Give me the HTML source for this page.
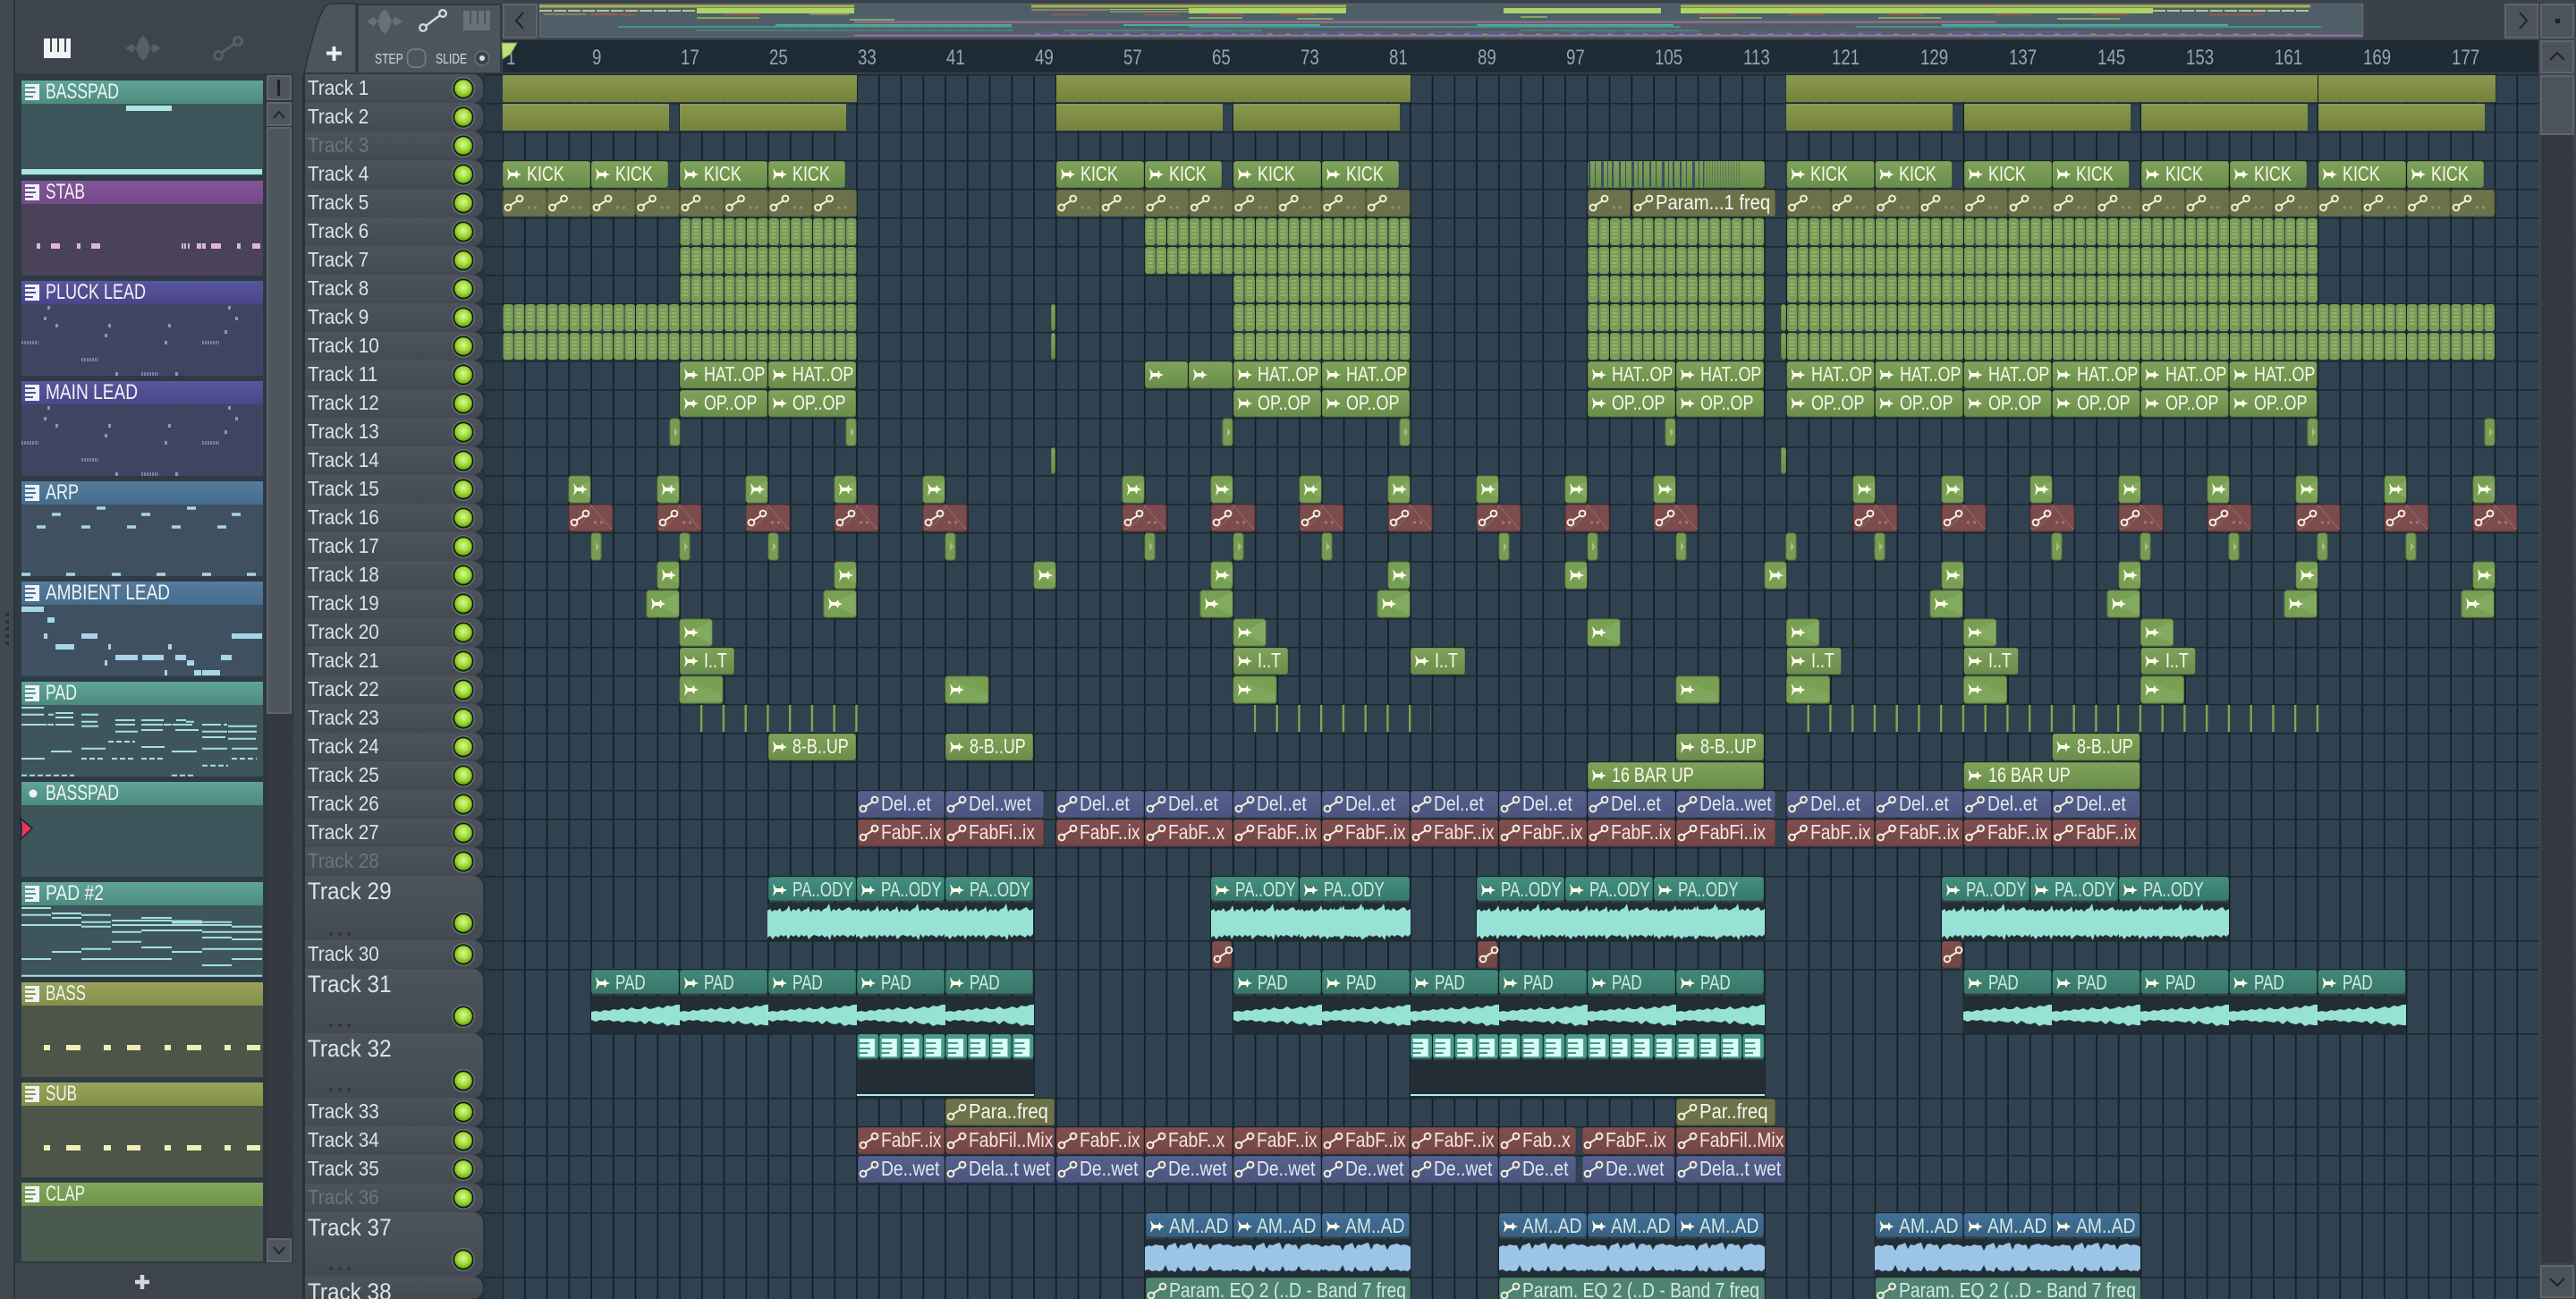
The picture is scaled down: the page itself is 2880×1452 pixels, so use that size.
<!DOCTYPE html>
<html><head><meta charset="utf-8"><title>Playlist</title>
<style>
html,body{margin:0;padding:0;background:#3e444d;width:2880px;height:1452px;overflow:hidden}
svg{display:block;font-family:"Liberation Sans",sans-serif}
text{transform-box:fill-box;transform-origin:0 0;transform:scaleX(.84)}
.c rect{y:-22px;height:30px;rx:3px;stroke:rgba(10,20,10,.28);stroke-width:1px}
.c text{fill:#f8f8ee;font-size:23px}
.o rect{fill:url(#go);stroke:none;rx:0}
.g rect{fill:url(#gg)}
.a rect{fill:#6b7149}
.r rect{fill:url(#gr)}
.b rect{fill:url(#gb)}
.t rect{fill:url(#gt)}
.t2 rect{fill:url(#gt2)}
.n rect{fill:url(#gn)}
.p rect{fill:#4f8272}
.h rect{height:27px}
.t text,.t2 text,.n text,.p text{fill:#cfe9e2}
.b text{fill:#e2e6f2}.r text{fill:#f5e4dc}
.g text{transform:scaleX(.78)}
.t text,.t2 text{transform:scaleX(.74)}
.a text{transform:scaleX(.88)}
.c rect.pt{stroke:none;rx:0}
.trk{fill:#d9e3ea;font-size:23px}
.trk text{transform:scaleX(.9)}
.big{font-size:27px}
.dis{fill:#6d747a}
.rul{fill:#93a6b6;font-size:24px}
.rul text{transform:scaleX(.78)}
.ch{fill:#f0f4f4;font-size:24px}
.ch text{transform:none}
.lbl{fill:#d3d8dc;font-size:16px;transform:scaleX(.76)}
</style></head><body>
<svg width="2880" height="1452" viewBox="0 0 2880 1452" xmlns="http://www.w3.org/2000/svg">
<defs>
<linearGradient id="go" x1="0" y1="0" x2="0" y2="1"><stop offset="0" stop-color="#8b984f"/><stop offset="1" stop-color="#74823c"/></linearGradient>
<linearGradient id="gg" x1="0" y1="0" x2="0" y2="1"><stop offset="0" stop-color="#7fa35b"/><stop offset="1" stop-color="#6a8d4a"/></linearGradient>
<linearGradient id="gr" x1="0" y1="0" x2="0" y2="1"><stop offset="0" stop-color="#80504f"/><stop offset="1" stop-color="#744547"/></linearGradient>
<linearGradient id="gb" x1="0" y1="0" x2="0" y2="1"><stop offset="0" stop-color="#55608c"/><stop offset="1" stop-color="#4b557f"/></linearGradient>
<linearGradient id="gt" x1="0" y1="0" x2="0" y2="1"><stop offset="0" stop-color="#42907f"/><stop offset="1" stop-color="#38786c"/></linearGradient>
<linearGradient id="gt2" x1="0" y1="0" x2="0" y2="1"><stop offset="0" stop-color="#41897b"/><stop offset="1" stop-color="#397668"/></linearGradient>
<linearGradient id="gn" x1="0" y1="0" x2="0" y2="1"><stop offset="0" stop-color="#42709a"/><stop offset="1" stop-color="#38607f"/></linearGradient>
<linearGradient id="pl" x1="0" y1="0" x2="0" y2="1"><stop offset="0" stop-color="#4c535b"/><stop offset="1" stop-color="#434a52"/></linearGradient>
<linearGradient id="h1" x1="0" y1="0" x2="0" y2="1"><stop offset="0" stop-color="#60a498"/><stop offset="1" stop-color="#4c8c7f"/></linearGradient>
<linearGradient id="h2" x1="0" y1="0" x2="0" y2="1"><stop offset="0" stop-color="#825696"/><stop offset="1" stop-color="#754889"/></linearGradient>
<linearGradient id="h3" x1="0" y1="0" x2="0" y2="1"><stop offset="0" stop-color="#58569c"/><stop offset="1" stop-color="#4a4688"/></linearGradient>
<linearGradient id="h4" x1="0" y1="0" x2="0" y2="1"><stop offset="0" stop-color="#567b9c"/><stop offset="1" stop-color="#456d8d"/></linearGradient>
<linearGradient id="h5" x1="0" y1="0" x2="0" y2="1"><stop offset="0" stop-color="#97a25c"/><stop offset="1" stop-color="#859046"/></linearGradient>
<linearGradient id="h6" x1="0" y1="0" x2="0" y2="1"><stop offset="0" stop-color="#80a65d"/><stop offset="1" stop-color="#6f9449"/></linearGradient>
<radialGradient id="led" cx=".5" cy=".42" r=".6"><stop offset="0" stop-color="#dcf79a"/><stop offset=".55" stop-color="#a4dc3c"/><stop offset="1" stop-color="#63a50e"/></radialGradient>
<pattern id="gl" width="24.75" height="10" patternUnits="userSpaceOnUse" patternTransform="translate(562,0)"><rect x="-.8" width="1.7" height="10" fill="#121d26"/><rect x="23.95" width="1.7" height="10" fill="#121d26"/></pattern>
<pattern id="rl" width="20" height="32" patternUnits="userSpaceOnUse" patternTransform="translate(0,83)"><rect width="20" height="1.6" fill="#1c2831"/></pattern>
<pattern id="hat" width="12.375" height="31" patternUnits="userSpaceOnUse" patternTransform="translate(562,-22)"><rect x=".5" width="11.3" height="30" rx="3" fill="#7a9d55"/><path d="M3 6h6M3 10h6M3 14h6M3 18h6M3 22h6" stroke="#a0bb80" stroke-width="1.3"/></pattern>
<g id="aptile"><rect x=".5" width="48.4" height="30" rx="3" fill="#6b7149" stroke="#555a3a"/><path d="M8.4 17.6L16.6 12.4" stroke="#f3eed8" stroke-width="2"/><circle cx="6" cy="20" r="3.4" fill="none" stroke="#f3eed8" stroke-width="2"/><circle cx="19" cy="10" r="3.4" fill="none" stroke="#f3eed8" stroke-width="2"/><path d="M28 20h3M35 20h3" stroke="#8d916e" stroke-width="3"/></g>
<pattern id="ap" width="49.5" height="31" patternUnits="userSpaceOnUse" patternTransform="translate(562,-22)"><use href="#aptile"/></pattern>
<pattern id="apb" width="49.5" height="31" patternUnits="userSpaceOnUse" patternTransform="translate(1180.75,-22)"><use href="#aptile"/></pattern>
<pattern id="pc" width="24.75" height="27" patternUnits="userSpaceOnUse" patternTransform="translate(562,-22)"><rect x=".5" width="23.6" height="27" rx="3" fill="#47998a"/><path fill="#d9fff6" fill-rule="evenodd" d="M3 5H20V25H3ZM3 9H14V11H3ZM3 15H15V17H3ZM3 20H12V22H3Z"/></pattern>
<pattern id="tick" width="24.75" height="31" patternUnits="userSpaceOnUse" patternTransform="translate(783,-22)"><rect width="2.4" height="30" fill="#85a552"/></pattern>
<pattern id="tp" width="240" height="32" patternUnits="userSpaceOnUse" patternTransform="translate(320,83)"><rect width="220" height="32" rx="12" fill="url(#pl)"/><circle cx="198" cy="16" r="13" fill="#6d747a"/><circle cx="198" cy="16" r="11.6" fill="#0f1f12"/><circle cx="198" cy="16" r="9.8" fill="url(#led)"/></pattern>
<pattern id="hc" width="4" height="4" patternUnits="userSpaceOnUse"><rect width="4" height="4" fill="#2f353b"/><path d="M0 4L4 0" stroke="#3a4047" stroke-width="1"/></pattern>
<path id="s" fill="#fffde8" d="M5 -14L9 -9L14 -9L15.5 -12L17 -8.5L21 -7L17 -5.5L15.5 -2L14 -5L9 -5L5 0L6.5 -7Z"/>
<g id="u" fill="none" stroke="#f3eed8" stroke-width="2"><path d="M8.4 -4.4L16.6 -9.6"/><circle cx="6" cy="-2" r="3.4"/><circle cx="19" cy="-12" r="3.4"/></g>
<g id="gi"><rect y="-22" width="24" height="30" rx="3" fill="#78a053" stroke="#5c7c40"/><path d="M3 -7L24 -16V2Z" fill="#8bb06b" opacity=".6"/><use href="#s" x="0"/></g>
<g id="gw"><rect y="-22" width="36" height="30" rx="3" fill="#78a053" stroke="#5c7c40"/><path d="M8 -7L36 -20V6Z" fill="#8bb06b" opacity=".6"/><use href="#s"/></g>
<g id="gn4"><rect y="-22" width="48" height="30" rx="3" fill="#78a053" stroke="#5c7c40"/><path d="M8 -18L47 -2V6H8Z" fill="#8bb06b" opacity=".4"/><use href="#s"/></g>
<g id="nr"><rect y="-22" width="11" height="30" rx="3" fill="#779c53" stroke="#5c7c40"/><path d="M5 -12L9 -7L5 -2Z" fill="#a3bf88"/></g>
<g id="rd"><rect y="-22" width="49" height="30" rx="3" fill="#7b4b4d" stroke="#5a3335"/><path d="M1 6Q18 2 25 -21L48 6" fill="none" stroke="#94696a" stroke-width="1"/><use href="#u"/><path d="M28 -2h3M35 -2h3" stroke="#9e7777" stroke-width="3"/></g>
<polygon id="w1" fill="#96e2d4" points="0,-13 3,-15 5,-12 8,-14 11,-13 14,-16 16,-12 19,-13 22,-15 24,-19 26,-12 29,-15 32,-13 35,-16 38,-12 41,-14 44,-15 46,-18 48,-11 51,-15 54,-13 57,-15 60,-12 63,-15 66,-16 69,-21 71,-12 74,-15 77,-13 80,-16 83,-13 86,-14 89,-16 92,-17 95,-13 99,-15 99,13 96,16 93,14 90,17 87,15 84,14 81,16 78,14 75,17 72,13 70,20 67,15 64,17 61,14 58,16 55,15 52,14 49,16 46,19 44,14 41,16 38,14 35,17 32,14 29,16 26,14 23,19 21,14 18,16 15,14 12,17 9,15 6,19 3,15 0,17"/>
<polygon id="w2" fill="#96e2d4" points="0,-4 5,-5 10,-4 15,-6 20,-5 25,-7 30,-6 35,-8 40,-6 45,-9 50,-7 55,-7 60,-10 65,-7 70,-8 75,-10 80,-8 85,-11 90,-10 95,-12 99,-12 99,11 95,11 90,10 85,12 80,8 75,10 70,9 65,6 60,10 55,6 50,8 45,7 40,6 35,8 30,6 25,7 20,5 15,6 10,5 5,7 0,5"/>
<polygon id="w3" fill="#9cc4e6" points="0,-12 4,-14 8,-13 12,-15 16,-14 20,-14 23,-8 26,-14 30,-15 34,-17 37,-10 40,-15 44,-14 48,-16 52,-17 55,-9 58,-15 62,-16 66,-14 70,-15 73,-9 76,-14 80,-15 84,-16 88,-14 92,-15 96,-14 99,-12 99,12 96,15 92,14 88,15 84,13 80,14 76,14 73,9 70,14 66,15 62,14 58,15 55,9 52,15 48,14 44,15 40,14 37,10 34,16 30,14 26,15 23,8 20,14 16,15 12,14 8,15 4,13 0,14"/>
</defs>

<rect width="2880" height="1452" fill="#3e444d"/>
<!-- grid -->
<rect x="542" y="83" width="2298" height="1369" fill="#30424f"/>
<rect x="542" y="83" width="20" height="1369" fill="#2b3a45"/>
<rect x="562" y="83" width="2276" height="1369" fill="url(#gl)"/>
<rect x="542" y="83" width="2296" height="896" fill="url(#rl)"/>
<path d="M542 979.8H2838M542 1051.8H2838M542 1083.8H2838M542 1155.8H2838M542 1227.8H2838M542 1259.8H2838M542 1291.8H2838M542 1323.8H2838M542 1355.8H2838M542 1427.8H2838" stroke="#1c2831" stroke-width="1.6"/>
<rect x="341" y="83" width="201" height="1369" fill="#27343e"/>
<!-- track headers -->
<rect x="320" y="83" width="240" height="896" fill="url(#tp)"/>
<g fill="url(#pl)">
<rect x="320" y="979" width="220" height="72" rx="12"/><rect x="320" y="1051" width="220" height="32" rx="12"/><rect x="320" y="1083" width="220" height="72" rx="12"/><rect x="320" y="1155" width="220" height="72" rx="12"/><rect x="320" y="1227" width="220" height="32" rx="12"/><rect x="320" y="1259" width="220" height="32" rx="12"/><rect x="320" y="1291" width="220" height="32" rx="12"/><rect x="320" y="1323" width="220" height="32" rx="12"/><rect x="320" y="1355" width="220" height="72" rx="12"/><rect x="320" y="1427" width="220" height="25" rx="12"/>
</g>
<g id="ld">
<g fill="#6d747a"><circle cx="518" cy="1032" r="13"/><circle cx="518" cy="1067" r="13"/><circle cx="518" cy="1136" r="13"/><circle cx="518" cy="1208" r="13"/><circle cx="518" cy="1243" r="13"/><circle cx="518" cy="1275" r="13"/><circle cx="518" cy="1307" r="13"/><circle cx="518" cy="1339" r="13"/><circle cx="518" cy="1408" r="13"/></g>
<g fill="#0f1f12"><circle cx="518" cy="1032" r="11.6"/><circle cx="518" cy="1067" r="11.6"/><circle cx="518" cy="1136" r="11.6"/><circle cx="518" cy="1208" r="11.6"/><circle cx="518" cy="1243" r="11.6"/><circle cx="518" cy="1275" r="11.6"/><circle cx="518" cy="1307" r="11.6"/><circle cx="518" cy="1339" r="11.6"/><circle cx="518" cy="1408" r="11.6"/></g>
<g fill="url(#led)"><circle cx="518" cy="1032" r="9.8"/><circle cx="518" cy="1067" r="9.8"/><circle cx="518" cy="1136" r="9.8"/><circle cx="518" cy="1208" r="9.8"/><circle cx="518" cy="1243" r="9.8"/><circle cx="518" cy="1275" r="9.8"/><circle cx="518" cy="1307" r="9.8"/><circle cx="518" cy="1339" r="9.8"/><circle cx="518" cy="1408" r="9.8"/></g>
</g>
<path d="M368 1042h4v4h-4zM378 1042h4v4h-4zM388 1042h4v4h-4zM368 1144h4v4h-4zM378 1144h4v4h-4zM388 1144h4v4h-4zM368 1216h4v4h-4zM378 1216h4v4h-4zM388 1216h4v4h-4zM368 1416h4v4h-4zM378 1416h4v4h-4zM388 1416h4v4h-4z" fill="#34393f"/>
<g class="trk">
<text x="344" y="106">Track 1</text><text x="344" y="138">Track 2</text><text x="344" y="170" class="dis">Track 3</text><text x="344" y="202">Track 4</text><text x="344" y="234">Track 5</text><text x="344" y="266">Track 6</text><text x="344" y="298">Track 7</text><text x="344" y="330">Track 8</text><text x="344" y="362">Track 9</text><text x="344" y="394">Track 10</text><text x="344" y="426">Track 11</text><text x="344" y="458">Track 12</text><text x="344" y="490">Track 13</text><text x="344" y="522">Track 14</text><text x="344" y="554">Track 15</text><text x="344" y="586">Track 16</text><text x="344" y="618">Track 17</text><text x="344" y="650">Track 18</text><text x="344" y="682">Track 19</text><text x="344" y="714">Track 20</text><text x="344" y="746">Track 21</text><text x="344" y="778">Track 22</text><text x="344" y="810">Track 23</text><text x="344" y="842">Track 24</text><text x="344" y="874">Track 25</text><text x="344" y="906">Track 26</text><text x="344" y="938">Track 27</text><text x="344" y="970" class="dis">Track 28</text>
<text x="344" y="1005" class="big">Track 29</text><text x="344" y="1074">Track 30</text><text x="344" y="1109" class="big">Track 31</text><text x="344" y="1181" class="big">Track 32</text><text x="344" y="1250">Track 33</text><text x="344" y="1282">Track 34</text><text x="344" y="1314">Track 35</text><text x="344" y="1346" class="dis">Track 36</text><text x="344" y="1381" class="big">Track 37</text><text x="344" y="1453" class="big">Track 38</text>
</g>

<!-- left area -->
<rect x="0" y="0" width="340" height="1452" fill="#3e444d"/>
<rect x="338" y="83" width="3" height="1369" fill="#2a3138"/>
<rect x="0" y="0" width="15" height="1452" fill="#414850"/>
<rect x="15" y="0" width="2" height="1452" fill="#2a3138"/>
<path d="M6 685h4v4h-4zM6 693h4v4h-4zM6 701h4v4h-4zM6 709h4v4h-4zM6 717h4v4h-4z" fill="#2b3138"/>
<rect x="17" y="82" width="311" height="1330" fill="#2e3a44"/>
<rect x="296" y="84" width="30" height="1326" fill="#2f353b"/>
<!-- toolbar icons -->
<path fill="#f0f2f3" fill-rule="evenodd" d="M49 43H79V65H49ZM56 43H58V58H56ZM64 43H66V58H64ZM72 43H74V58H72Z"/>
<path transform="translate(140,40)" fill="#565e66" d="M0 14L8 9L12 14L16 4L20 0L24 4L28 14L32 9L40 14L32 19L28 14L24 24L20 28L16 24L12 14L8 19Z"/>
<g fill="none" stroke="#565e66" stroke-width="3"><circle cx="244" cy="62" r="4.5"/><circle cx="266" cy="46" r="4.5"/><path d="M248 59L262 49"/></g>
<!-- cards -->
<g>
<rect x="24" y="90" width="270" height="106" fill="#3e565b"/><rect x="24" y="90" width="270" height="26" fill="url(#h1)"/>
<rect x="24" y="202" width="270" height="106" fill="#4a4259"/><rect x="24" y="202" width="270" height="26" fill="url(#h2)"/>
<rect x="24" y="314" width="270" height="106" fill="#3f4560"/><rect x="24" y="314" width="270" height="26" fill="url(#h3)"/>
<rect x="24" y="426" width="270" height="106" fill="#3f4560"/><rect x="24" y="426" width="270" height="26" fill="url(#h3)"/>
<rect x="24" y="538" width="270" height="106" fill="#3f5060"/><rect x="24" y="538" width="270" height="26" fill="url(#h4)"/>
<rect x="24" y="650" width="270" height="106" fill="#3f5060"/><rect x="24" y="650" width="270" height="26" fill="url(#h4)"/>
<rect x="24" y="762" width="270" height="106" fill="#3e565b"/><rect x="24" y="762" width="270" height="26" fill="url(#h1)"/>
<rect x="24" y="874" width="270" height="106" fill="#3e565b"/><rect x="24" y="874" width="270" height="26" fill="url(#h1)"/>
<rect x="24" y="986" width="270" height="106" fill="#3e565b"/><rect x="24" y="986" width="270" height="26" fill="url(#h1)"/>
<rect x="24" y="1098" width="270" height="106" fill="#4d5549"/><rect x="24" y="1098" width="270" height="26" fill="url(#h5)"/>
<rect x="24" y="1210" width="270" height="106" fill="#4d5549"/><rect x="24" y="1210" width="270" height="26" fill="url(#h5)"/>
<rect x="24" y="1322" width="270" height="88" fill="#4a5a4e"/><rect x="24" y="1322" width="270" height="26" fill="url(#h6)"/>
</g>
<g fill="#eef3fa" fill-rule="evenodd">
<path id="ci" d="M28 94H44V112H28ZM28 97H39V99H28ZM28 102H40V104H28ZM28 107H37V109H28Z"/>
<use href="#ci" y="112"/><use href="#ci" y="224"/><use href="#ci" y="336"/><use href="#ci" y="448"/><use href="#ci" y="560"/><use href="#ci" y="672"/><use href="#ci" y="896"/><use href="#ci" y="1008"/><use href="#ci" y="1120"/><use href="#ci" y="1232"/>
</g>
<circle cx="37" cy="887" r="4.5" fill="#eef3fa"/>
<g class="ch">
<text x="51" y="110" textLength="82" lengthAdjust="spacingAndGlyphs">BASSPAD</text>
<text x="51" y="222" textLength="44" lengthAdjust="spacingAndGlyphs">STAB</text>
<text x="51" y="334" textLength="112" lengthAdjust="spacingAndGlyphs">PLUCK LEAD</text>
<text x="51" y="446" textLength="103" lengthAdjust="spacingAndGlyphs">MAIN LEAD</text>
<text x="51" y="558" textLength="37" lengthAdjust="spacingAndGlyphs">ARP</text>
<text x="51" y="670" textLength="139" lengthAdjust="spacingAndGlyphs">AMBIENT LEAD</text>
<text x="51" y="782" textLength="35" lengthAdjust="spacingAndGlyphs">PAD</text>
<text x="51" y="894" textLength="82" lengthAdjust="spacingAndGlyphs">BASSPAD</text>
<text x="51" y="1006" textLength="65" lengthAdjust="spacingAndGlyphs">PAD #2</text>
<text x="51" y="1118" textLength="45" lengthAdjust="spacingAndGlyphs">BASS</text>
<text x="51" y="1230" textLength="35" lengthAdjust="spacingAndGlyphs">SUB</text>
<text x="51" y="1342" textLength="44" lengthAdjust="spacingAndGlyphs">CLAP</text>
</g>
<!-- thumbnails -->
<path d="M141 121h51M24 192h269" stroke="#a9e4e0" stroke-width="6"/>
<path d="M41 275h4M57 275h10M86 275h4M102 275h10M203 275h2M206 275h2M210 275h2M220 275h5M226 275h4M236 275h11M265 275h4M282 275h9" stroke="#e0b2e6" stroke-width="6"/>
<g id="pl1" stroke="#8f8fd4" fill="none">
<path stroke-width="4" d="M53 344h3M49 356h3M62 364h3M121 364h3M117 375h3M188 364h3M184 383h3M255 344h3M263 356h3M251 371h3M129 418h3M196 418h3"/>
<path stroke-width="4" stroke="#7a7cae" stroke-dasharray="2 1" d="M24 383h19M226 383h19M91 402h19M158 418h19"/>
</g>
<use href="#pl1" y="112"/>
<path stroke="#a8d4e8" stroke-width="3.6" d="M108 568h10M58 575h10M158 575h10M209 568h10M259 575h10M41 589h10M91 589h10M142 589h10M192 589h10M243 589h10M24 642h10M74 642h10M125 642h10M175 642h10M226 642h10M276 642h10"/>
<path stroke="#a8d4e8" stroke-width="6" d="M24 681h25M53 693h8M49 711h4M91 711h18M259 711h34M62 723h21M121 723h3M188 723h4M129 735h25M159 735h24M196 735h12M247 735h12M209 741h8M117 741h3M184 752h3M217 752h8M226 752h20"/>
<path stroke="#a6e0dc" stroke-width="2" d="M24 791h25M24 798.7h25M62 797h20M54 798.7h6M62 802h20M24 810h28M53 810h7M62 810h21M91 798.7h19M91 806.7h18M91 811.7h19M129 805h22M129 810h22M129 817.7h25M158 805h25M158 810h24M183 810h9M158 816h24M197 805h11M193 810h22M196 816h26M208 806.7h9M226 810h21M250 810h4M226 817.7h28M226 824h26M255 811.7h32M255 817.7h32M255 825.7h31M91 836.7h27M158 835h26M57 840h23M192 840h28M226 836.7h28M259 836.7h29M24 848h26"/>
<path stroke="#a6e0dc" stroke-width="2" stroke-dasharray="6 3" d="M91 848h27M125 848h27M158 848h27M259 848h28M226 855.7h29M121 829h30M24 866.7h59M192 866.7h27"/>
<path stroke="#a6e0dc" stroke-width="2" d="M24 1015h33M24 1022.7h33M91 1022.7h33M58 1021h33M58 1026h33M24 1034h67M91 1030.7h33M91 1035.7h33M125 1029h33M125 1034h33M125 1041.7h33M125 1052.7h33M158 1026h34M158 1029h34M158 1034h34M158 1040h34M192 1034h34M192 1040h34M226 1030.7h33M226 1034h33M226 1041.7h33M226 1048h33M259 1035.7h34M259 1041.7h34M259 1050h34M91 1060.7h33M158 1059h34M58 1064h33M192 1064h34M226 1060.7h67M24 1072h33M91 1072h101M259 1072h34M226 1079h33M24 1090.7h269"/>
<path stroke="#a6e0dc" stroke-width="4" d="M192 1030.5h34"/>
<path stroke="#efefb4" stroke-width="6" d="M49 1171h7M74 1171h16M116 1171h8M142 1171h15M184 1171h7M209 1171h16M251 1171h7M276 1171h15M49 1283h7M74 1283h16M116 1283h8M142 1283h15M184 1283h7M209 1283h16M251 1283h7M276 1283h15"/>
<path d="M23 915L36 926L23 938Q25 926 23 915Z" fill="#e8365b" stroke="#1a2230" stroke-width="1.5"/>
<!-- left scrollbar -->
<rect x="298" y="797" width="28" height="586" fill="url(#hc)"/>
<g fill="#4e555d" stroke="#5e656c" stroke-width="2"><rect x="299" y="85" width="26" height="26"/><rect x="299" y="115" width="26" height="25"/><rect x="299" y="143" width="26" height="654"/><rect x="299" y="1385" width="26" height="25"/></g>
<rect x="310" y="89" width="3" height="18" fill="#1c2228"/>
<path d="M306 132L312 125L318 132M306 1394L312 1401L318 1394" fill="none" stroke="#1c2228" stroke-width="1.8"/>
<path d="M151 1433h16M159 1425v16" stroke="#d4d9dd" stroke-width="4.5"/>
<!-- track tab -->
<path d="M340 82C345 60 354 22 362 10Q365 4 372 4H398V82Z" fill="#4c545c" stroke="#2c333a" stroke-width="1.5"/>
<rect x="400" y="5" width="160" height="77" fill="#4c545c" stroke="#2c333a" stroke-width="1.5"/>
<path d="M365 59.500h17M373.500 52v16" stroke="#eceff1" stroke-width="4"/>
<path transform="translate(410,10)" fill="#68707a" d="M0 14L8 9L12 14L16 4L20 0L24 4L28 14L32 9L40 14L32 19L28 14L24 24L20 28L16 24L12 14L8 19Z"/>
<g fill="none" stroke="#d4d9dd" stroke-width="2.4"><circle cx="473" cy="31" r="3.8"/><circle cx="495" cy="15" r="3.8"/><path d="M476 29L492 17"/></g>
<path fill="#68707a" fill-rule="evenodd" d="M518 12H548V34H518ZM525 12H527V27H525ZM533 12H535V27H533ZM541 12H543V27H541Z"/>
<text x="419" y="71" class="lbl">STEP</text><text x="487" y="71" class="lbl">SLIDE</text>
<rect x="455.500" y="55" width="20" height="20" rx="7" fill="none" stroke="#737a81" stroke-width="1.8"/>
<circle cx="539" cy="65" r="8" fill="#3b4249" stroke="#6b7279" stroke-width="1.4"/><circle cx="539" cy="65" r="3" fill="#d8dde0"/>
<!-- top right -->
<rect x="562" y="0" width="2318" height="45" fill="#3a4149"/>
<rect x="563" y="5" width="37" height="37" fill="#4c535b" stroke="#5e656c" stroke-width="2"/>
<path d="M585 14L577 23L585 32" fill="none" stroke="#1c2228" stroke-width="2"/>
<rect x="2801" y="5" width="36" height="37" fill="#4c535b" stroke="#5e656c" stroke-width="2"/>
<path d="M2817 14L2825 23L2817 32" fill="none" stroke="#1c2228" stroke-width="2"/>
<rect x="2841" y="5" width="36" height="37" fill="#4c535b" stroke="#5e656c" stroke-width="2"/>
<rect x="2857" y="21" width="5" height="5" fill="#1c2228"/>
<!-- overview -->
<rect x="603.500" y="4.500" width="2038" height="37" fill="#505e68" stroke="#5d6971" stroke-width="1.5"/>
<g>
<path d="M603 7h352M1153 7h352M1879 7h704" stroke="#a9b44e" stroke-width="3"/>
<path d="M603 12h176M2407 12h176" stroke="#d8e8a0" stroke-width="1.5" stroke-dasharray="14 2"/>
<path d="M779 12h176M1329 12h176M1681 12h176M1879 12h528" stroke="#a8d468" stroke-width="6"/>
<path d="M1241 10.500h88M1241 13h88" stroke="#a8c468" stroke-width="1"/>
<path d="M1153 11h88M608 16h48M660 16h30M905 16h44" stroke="#c2a070" stroke-width="1"/>
<path d="M660 16.500h50M810 16.500h40M1175 16.500h40M1278 16.500h40M1350 16.500h40M1430 16.500h40M1900 16.500h40M2000 16.500h40M2110 16.500h40M2230 16.500h40M2340 16.500h40M2470 16.500h60" stroke="#9a5a50" stroke-width="1.5"/>
<path d="M779 20h70M950 22h50M1329 20h60M1450 21h40M1700 19h30M1900 20h70M2100 20h70M2300 21h70" stroke="#98bc60" stroke-width="1.5"/>
<path d="M955 24h925M1879 24h352" stroke="#8878a8" stroke-width="1.2"/>
<path d="M955 25.500h925M1879 25.500h352" stroke="#a06670" stroke-width="1.2"/>
<path d="M867 28h264M1256 28h220M1651 28h220M2171 28h320" stroke="#50c0b0" stroke-width="1.5"/>
<path d="M691 30h440M1329 30h550M2075 30h520" stroke="#3fa69a" stroke-width="1.5"/>
<path d="M779 34h176M955 34h177M1190 34h220M1700 34h200" stroke="#4e8a7c" stroke-width="1.5" stroke-dasharray="18 1"/>
<path d="M1157 36h120M1290 36h130M1460 36h90M1600 36h100M1750 36h150M1950 36h160M2180 36h150" stroke="#5a62c0" stroke-width="1.3" stroke-dasharray="26 6"/>
<path d="M1157 38h1440" stroke="#6aa060" stroke-width="1.3" stroke-dasharray="6 14"/>
<path d="M955 39.500h1686" stroke="#b46fb4" stroke-width="1.5"/>
</g>
<!-- ruler -->
<rect x="562" y="45" width="2278" height="37" fill="#1f2b34"/>
<rect x="562" y="81" width="2278" height="2" fill="#333f49"/>
<rect x="2838" y="0" width="42" height="1452" fill="#3e444d"/>
<rect x="2841" y="5" width="36" height="37" fill="#4c535b" stroke="#5e656c" stroke-width="2"/>
<rect x="2857" y="21" width="5" height="5" fill="#1c2228"/>
<rect x="2841" y="84" width="36" height="1328" fill="url(#hc)"/>
<g fill="#4c535b" stroke="#5e656c" stroke-width="2"><rect x="2841" y="46" width="36" height="35"/><rect x="2841" y="85" width="36" height="65"/><rect x="2841" y="1415" width="36" height="35"/></g>
<path d="M2851 67L2859 59L2867 67M2851 1429L2859 1437L2867 1429" fill="none" stroke="#1c2228" stroke-width="2"/>
<g class="rul">
<text x="566" y="72">1</text><text x="662" y="72">9</text><text x="761" y="72">17</text><text x="860" y="72">25</text><text x="959" y="72">33</text><text x="1058" y="72">41</text><text x="1157" y="72">49</text><text x="1256" y="72">57</text><text x="1355" y="72">65</text><text x="1454" y="72">73</text><text x="1553" y="72">81</text><text x="1652" y="72">89</text><text x="1751" y="72">97</text><text x="1850" y="72">105</text><text x="1949" y="72">113</text><text x="2048" y="72">121</text><text x="2147" y="72">129</text><text x="2246" y="72">137</text><text x="2345" y="72">145</text><text x="2444" y="72">153</text><text x="2543" y="72">161</text><text x="2642" y="72">169</text><text x="2741" y="72">177</text>
</g>
<path d="M561 48H578L571 60L562 66Z" fill="#bfe07a" stroke="#7f9f45"/>

<!-- clips -->
<g class="c o" transform="translate(0,106)"><rect x="562" width="396" /><rect x="1181" width="396" /><rect x="1997" width="594" /><rect x="2592" width="198" /></g>
<g class="c o" transform="translate(0,138)"><rect x="562" width="186" /><rect x="760" width="186" /><rect x="1181" width="186" /><rect x="1379" width="186" /><rect x="1997" width="186" /><rect x="2196" width="186" /><rect x="2394" width="186" /><rect x="2592" width="186" /></g>

<g class="c g" transform="translate(0,202)">
<rect x="562" width="98" /><use href="#s" x="562"/><text x="589">KICK</text>
<rect x="661" width="86" /><use href="#s" x="661"/><text x="688">KICK</text>
<rect x="760" width="98" /><use href="#s" x="760"/><text x="787">KICK</text>
<rect x="859" width="86" /><use href="#s" x="859"/><text x="886">KICK</text>
<rect x="1181" width="98" /><use href="#s" x="1181"/><text x="1208">KICK</text>
<rect x="1280" width="86" /><use href="#s" x="1280"/><text x="1307">KICK</text>
<rect x="1379" width="98" /><use href="#s" x="1379"/><text x="1406">KICK</text>
<rect x="1478" width="86" /><use href="#s" x="1478"/><text x="1505">KICK</text>
<rect x="1775" width="198" />
<path d="M1776 -7H1905" stroke="#3c5068" stroke-width="29" stroke-dasharray="2 5 1 6 3 4 1 4 2 6"/>
<path d="M1905 -7H1946" stroke="#5b7a55" stroke-width="29" stroke-dasharray="1 2"/>
<rect x="1997.500" width="98" /><use href="#s" x="1997.500"/><text x="2024">KICK</text>
<rect x="2096.500" width="86" /><use href="#s" x="2096.500"/><text x="2123">KICK</text>
<rect x="2196" width="98" /><use href="#s" x="2196"/><text x="2223">KICK</text>
<rect x="2294.500" width="86" /><use href="#s" x="2294.500"/><text x="2321">KICK</text>
<rect x="2394" width="98" /><use href="#s" x="2394"/><text x="2421">KICK</text>
<rect x="2493" width="86" /><use href="#s" x="2493"/><text x="2520">KICK</text>
<rect x="2592" width="98" /><use href="#s" x="2592"/><text x="2619">KICK</text>
<rect x="2691" width="86" /><use href="#s" x="2691"/><text x="2718">KICK</text>
</g>

<g class="c" transform="translate(0,234)">
<rect class="pt" x="562" width="396" fill="url(#ap)" />
<rect class="pt" x="1180.750" width="396" fill="url(#apb)" />
<rect class="pt" x="1997.500" width="792" fill="url(#ap)" />
</g>
<g class="c a" transform="translate(0,234)">
<rect x="1775" width="48" /><use href="#u" x="1775"/><path d="M1803 -2h3M1810 -2h3" stroke="#8d916e" stroke-width="3"/>
<rect x="1825" width="160" /><use href="#u" x="1825"/><text x="1851">Param...1 freq</text>
</g>

<g class="c" transform="translate(0,266)"><rect class="pt" x="760" width="198" fill="url(#hat)" /><rect class="pt" x="1279.750" width="297" fill="url(#hat)" /><rect class="pt" x="1774.750" width="198" fill="url(#hat)" /><rect class="pt" x="1997.500" width="594" fill="url(#hat)" /></g>
<g class="c" transform="translate(0,298)"><rect class="pt" x="760" width="198" fill="url(#hat)" /><rect class="pt" x="1279.750" width="297" fill="url(#hat)" /><rect class="pt" x="1774.750" width="198" fill="url(#hat)" /><rect class="pt" x="1997.500" width="594" fill="url(#hat)" /></g>
<g class="c" transform="translate(0,330)"><rect class="pt" x="760" width="198" fill="url(#hat)" /><rect class="pt" x="1378.750" width="198" fill="url(#hat)" /><rect class="pt" x="1774.750" width="198" fill="url(#hat)" /><rect class="pt" x="1997.500" width="594" fill="url(#hat)" /></g>
<g class="c" transform="translate(0,362)"><rect class="pt" x="562" width="396" fill="url(#hat)" /><rect class="pt" x="1378.750" width="198" fill="url(#hat)" /><rect class="pt" x="1774.750" width="198" fill="url(#hat)" /><rect class="pt" x="1997.500" width="792" fill="url(#hat)" /><g class="g"><rect x="1175" width="5" /><rect x="1991" width="6" /></g></g>
<g class="c" transform="translate(0,394)"><rect class="pt" x="562" width="396" fill="url(#hat)" /><rect class="pt" x="1378.750" width="198" fill="url(#hat)" /><rect class="pt" x="1774.750" width="198" fill="url(#hat)" /><rect class="pt" x="1997.500" width="792" fill="url(#hat)" /><g class="g"><rect x="1175" width="5" /><rect x="1991" width="6" /></g></g>

<g class="c g" transform="translate(0,426)">
<rect x="760" width="98" /><use href="#s" x="760"/><text x="787">HAT..OP</text>
<rect x="859" width="98" /><use href="#s" x="859"/><text x="886">HAT..OP</text>
<rect x="1280" width="48" /><use href="#s" x="1280"/>
<rect x="1329" width="49" /><use href="#s" x="1329"/>
<rect x="1379" width="98" /><use href="#s" x="1379"/><text x="1406">HAT..OP</text>
<rect x="1478" width="98" /><use href="#s" x="1478"/><text x="1505">HAT..OP</text>
<rect x="1775" width="98" /><use href="#s" x="1775"/><text x="1802">HAT..OP</text>
<rect x="1874" width="98" /><use href="#s" x="1874"/><text x="1901">HAT..OP</text>
<rect x="1997.500" width="98" /><use href="#s" x="1997.500"/><text x="2025">HAT..OP</text>
<rect x="2096.500" width="98" /><use href="#s" x="2096.500"/><text x="2124">HAT..OP</text>
<rect x="2195.500" width="98" /><use href="#s" x="2195.500"/><text x="2223">HAT..OP</text>
<rect x="2294.500" width="98" /><use href="#s" x="2294.500"/><text x="2322">HAT..OP</text>
<rect x="2393.500" width="98" /><use href="#s" x="2393.500"/><text x="2421">HAT..OP</text>
<rect x="2492.500" width="98" /><use href="#s" x="2492.500"/><text x="2520">HAT..OP</text>
</g>
<g class="c g" transform="translate(0,458)">
<rect x="760" width="98" /><use href="#s" x="760"/><text x="787">OP..OP</text>
<rect x="859" width="98" /><use href="#s" x="859"/><text x="886">OP..OP</text>
<rect x="1379" width="98" /><use href="#s" x="1379"/><text x="1406">OP..OP</text>
<rect x="1478" width="98" /><use href="#s" x="1478"/><text x="1505">OP..OP</text>
<rect x="1775" width="98" /><use href="#s" x="1775"/><text x="1802">OP..OP</text>
<rect x="1874" width="98" /><use href="#s" x="1874"/><text x="1901">OP..OP</text>
<rect x="1997.500" width="98" /><use href="#s" x="1997.500"/><text x="2025">OP..OP</text>
<rect x="2096.500" width="98" /><use href="#s" x="2096.500"/><text x="2124">OP..OP</text>
<rect x="2195.500" width="98" /><use href="#s" x="2195.500"/><text x="2223">OP..OP</text>
<rect x="2294.500" width="98" /><use href="#s" x="2294.500"/><text x="2322">OP..OP</text>
<rect x="2393.500" width="98" /><use href="#s" x="2393.500"/><text x="2421">OP..OP</text>
<rect x="2492.500" width="98" /><use href="#s" x="2492.500"/><text x="2520">OP..OP</text>
</g>
<g transform="translate(0,490)"><use href="#nr" x="749"/><use href="#nr" x="946"/><use href="#nr" x="1367"/><use href="#nr" x="1565"/><use href="#nr" x="1862"/><use href="#nr" x="2580"/><use href="#nr" x="2778"/></g>
<g class="c g" transform="translate(0,522)"><rect x="1175" width="5" /><rect x="1991" width="6" /></g>
<g transform="translate(0,554)"><use href="#gi" x="636"/><use href="#gi" x="735"/><use href="#gi" x="834"/><use href="#gi" x="933"/><use href="#gi" x="1032"/><use href="#gi" x="1255"/><use href="#gi" x="1354"/><use href="#gi" x="1453"/><use href="#gi" x="1552"/><use href="#gi" x="1651"/><use href="#gi" x="1750"/><use href="#gi" x="1849"/><use href="#gi" x="2072"/><use href="#gi" x="2171"/><use href="#gi" x="2270"/><use href="#gi" x="2369"/><use href="#gi" x="2468"/><use href="#gi" x="2567"/><use href="#gi" x="2666"/><use href="#gi" x="2765"/></g>
<g transform="translate(0,586)"><use href="#rd" x="636"/><use href="#rd" x="735"/><use href="#rd" x="834"/><use href="#rd" x="933"/><use href="#rd" x="1032"/><use href="#rd" x="1255"/><use href="#rd" x="1354"/><use href="#rd" x="1453"/><use href="#rd" x="1552"/><use href="#rd" x="1651"/><use href="#rd" x="1750"/><use href="#rd" x="1849"/><use href="#rd" x="2072"/><use href="#rd" x="2171"/><use href="#rd" x="2270"/><use href="#rd" x="2369"/><use href="#rd" x="2468"/><use href="#rd" x="2567"/><use href="#rd" x="2666"/><use href="#rd" x="2765"/></g>
<g transform="translate(0,618)"><use href="#nr" x="661"/><use href="#nr" x="760"/><use href="#nr" x="859"/><use href="#nr" x="1057"/><use href="#nr" x="1280"/><use href="#nr" x="1379"/><use href="#nr" x="1478"/><use href="#nr" x="1676"/><use href="#nr" x="1775"/><use href="#nr" x="1874"/><use href="#nr" x="1997"/><use href="#nr" x="2096"/><use href="#nr" x="2294"/><use href="#nr" x="2393"/><use href="#nr" x="2492"/><use href="#nr" x="2591"/><use href="#nr" x="2690"/></g>
<g transform="translate(0,650)"><use href="#gi" x="735"/><use href="#gi" x="933"/><use href="#gi" x="1156"/><use href="#gi" x="1354"/><use href="#gi" x="1552"/><use href="#gi" x="1750"/><use href="#gi" x="1973"/><use href="#gi" x="2171"/><use href="#gi" x="2369"/><use href="#gi" x="2567"/><use href="#gi" x="2765"/></g>
<g transform="translate(0,682)"><use href="#gw" x="723"/><use href="#gw" x="921"/><use href="#gw" x="1342"/><use href="#gw" x="1540"/><use href="#gw" x="2158"/><use href="#gw" x="2356"/><use href="#gw" x="2554"/><use href="#gw" x="2752"/></g>
<g transform="translate(0,714)"><use href="#gw" x="760"/><use href="#gw" x="1379"/><use href="#gw" x="1775"/><use href="#gw" x="1997.500"/><use href="#gw" x="2195.500"/><use href="#gw" x="2393.500"/></g>
<g class="c g" transform="translate(0,746)">
<rect x="760" width="61" /><use href="#s" x="760"/><text x="787">I..T</text>
<rect x="1379" width="61" /><use href="#s" x="1379"/><text x="1406">I..T</text>
<rect x="1577" width="61" /><use href="#s" x="1577"/><text x="1604">I..T</text>
<rect x="1997.500" width="61" /><use href="#s" x="1997.500"/><text x="2025">I..T</text>
<rect x="2195.500" width="61" /><use href="#s" x="2195.500"/><text x="2223">I..T</text>
<rect x="2393.500" width="61" /><use href="#s" x="2393.500"/><text x="2421">I..T</text>
</g>
<g transform="translate(0,778)"><use href="#gn4" x="760"/><use href="#gn4" x="1057"/><use href="#gn4" x="1379"/><use href="#gn4" x="1874"/><use href="#gn4" x="1997.500"/><use href="#gn4" x="2195.500"/><use href="#gn4" x="2393.500"/></g>
<g class="c" transform="translate(0,810)"><rect class="pt" x="783" width="198" fill="url(#tick)" /><rect class="pt" x="1402" width="198" fill="url(#tick)" /><rect class="pt" x="2020" width="590" fill="url(#tick)" /></g>
<g class="c g" transform="translate(0,842)">
<rect x="859" width="98" /><use href="#s" x="859"/><text x="886">8-B..UP</text>
<rect x="1057" width="98" /><use href="#s" x="1057"/><text x="1084">8-B..UP</text>
<rect x="1874" width="98" /><use href="#s" x="1874"/><text x="1901">8-B..UP</text>
<rect x="2294.500" width="98" /><use href="#s" x="2294.500"/><text x="2322">8-B..UP</text>
</g>
<g class="c g" transform="translate(0,874)">
<rect x="1775" width="197" /><use href="#s" x="1775"/><text x="1802">16 BAR UP</text>
<rect x="2195.500" width="197" /><use href="#s" x="2195.500"/><text x="2223">16 BAR UP</text>
</g>
<g class="c b" transform="translate(0,906)">
<rect x="959" width="97" /><use href="#u" x="959"/><text x="985">Del..et</text>
<rect x="1057" width="110" /><use href="#u" x="1057"/><text x="1083">Del..wet</text>
<rect x="1181" width="98" /><use href="#u" x="1181"/><text x="1207">Del..et</text>
<rect x="1280" width="98" /><use href="#u" x="1280"/><text x="1306">Del..et</text>
<rect x="1379" width="98" /><use href="#u" x="1379"/><text x="1405">Del..et</text>
<rect x="1478" width="98" /><use href="#u" x="1478"/><text x="1504">Del..et</text>
<rect x="1577" width="98" /><use href="#u" x="1577"/><text x="1603">Del..et</text>
<rect x="1676" width="98" /><use href="#u" x="1676"/><text x="1702">Del..et</text>
<rect x="1775" width="98" /><use href="#u" x="1775"/><text x="1801">Del..et</text>
<rect x="1874" width="111" /><use href="#u" x="1874"/><text x="1900">Dela..wet</text>
<rect x="1997.500" width="98" /><use href="#u" x="1997.500"/><text x="2024">Del..et</text>
<rect x="2096.500" width="98" /><use href="#u" x="2096.500"/><text x="2123">Del..et</text>
<rect x="2195.500" width="98" /><use href="#u" x="2195.500"/><text x="2222">Del..et</text>
<rect x="2294.500" width="98" /><use href="#u" x="2294.500"/><text x="2321">Del..et</text>
</g>
<g class="c r" transform="translate(0,938)">
<rect x="959" width="97" /><use href="#u" x="959"/><text x="985">FabF..ix</text>
<rect x="1057" width="110" /><use href="#u" x="1057"/><text x="1083">FabFi..ix</text>
<rect x="1181" width="98" /><use href="#u" x="1181"/><text x="1207">FabF..ix</text>
<rect x="1280" width="98" /><use href="#u" x="1280"/><text x="1306">FabF..x</text>
<rect x="1379" width="98" /><use href="#u" x="1379"/><text x="1405">FabF..ix</text>
<rect x="1478" width="98" /><use href="#u" x="1478"/><text x="1504">FabF..ix</text>
<rect x="1577" width="98" /><use href="#u" x="1577"/><text x="1603">FabF..ix</text>
<rect x="1676" width="98" /><use href="#u" x="1676"/><text x="1702">FabF..ix</text>
<rect x="1775" width="98" /><use href="#u" x="1775"/><text x="1801">FabF..ix</text>
<rect x="1874" width="111" /><use href="#u" x="1874"/><text x="1900">FabFi..ix</text>
<rect x="1997.500" width="98" /><use href="#u" x="1997.500"/><text x="2024">FabF..ix</text>
<rect x="2096.500" width="98" /><use href="#u" x="2096.500"/><text x="2123">FabF..ix</text>
<rect x="2195.500" width="98" /><use href="#u" x="2195.500"/><text x="2222">FabF..ix</text>
<rect x="2294.500" width="98" /><use href="#u" x="2294.500"/><text x="2321">FabF..ix</text>
</g>
<!-- track 29 -->
<path d="M858 1030h298M1354 1030h223M1651 1030h322M2171 1030h321" stroke="#222d35" stroke-width="42"/>
<g transform="translate(0,1031)"><use href="#w1" x="858"/><use href="#w1" x="957"/><use href="#w1" x="1056"/><use href="#w1" x="1354"/><use href="#w1" x="1453"/><use href="#w1" x="1478"/><use href="#w1" x="1651"/><use href="#w1" x="1750"/><use href="#w1" x="1849"/><use href="#w1" x="1874"/><use href="#w1" x="2171"/><use href="#w1" x="2270"/><use href="#w1" x="2369"/><use href="#w1" x="2393"/></g>
<g class="c t h" transform="translate(0,1002)">
<rect x="859" width="98" /><use href="#s" x="859"/><text x="886">PA..ODY</text>
<rect x="958" width="98" /><use href="#s" x="958"/><text x="985">PA..ODY</text>
<rect x="1057" width="98" /><use href="#s" x="1057"/><text x="1084">PA..ODY</text>
<rect x="1354" width="98" /><use href="#s" x="1354"/><text x="1381">PA..ODY</text>
<rect x="1453" width="123" /><use href="#s" x="1453"/><text x="1480">PA..ODY</text>
<rect x="1651" width="98" /><use href="#s" x="1651"/><text x="1678">PA..ODY</text>
<rect x="1750" width="98" /><use href="#s" x="1750"/><text x="1777">PA..ODY</text>
<rect x="1849" width="123" /><use href="#s" x="1849"/><text x="1876">PA..ODY</text>
<rect x="2171" width="98" /><use href="#s" x="2171"/><text x="2198">PA..ODY</text>
<rect x="2270" width="98" /><use href="#s" x="2270"/><text x="2297">PA..ODY</text>
<rect x="2369" width="123" /><use href="#s" x="2369"/><text x="2396">PA..ODY</text>
</g>
<g class="c r" transform="translate(0,1074)"><rect x="1355" width="22" /><use href="#u" x="1355"/><rect x="1652" width="22" /><use href="#u" x="1652"/><rect x="2171" width="22" /><use href="#u" x="2171"/></g>
<!-- track 31 -->
<path d="M661 1134h495M1379 1134h594M2195 1134h495" stroke="#222d35" stroke-width="42"/>
<g transform="translate(0,1135)"><use href="#w2" x="661"/><use href="#w2" x="760"/><use href="#w2" x="859"/><use href="#w2" x="958"/><use href="#w2" x="1057"/><use href="#w2" x="1379"/><use href="#w2" x="1478"/><use href="#w2" x="1577"/><use href="#w2" x="1676"/><use href="#w2" x="1775"/><use href="#w2" x="1874"/><use href="#w2" x="2195"/><use href="#w2" x="2294"/><use href="#w2" x="2393"/><use href="#w2" x="2492"/><use href="#w2" x="2591"/></g>
<g class="c t2 h" transform="translate(0,1106)">
<rect x="661" width="98" /><use href="#s" x="661"/><text x="688">PAD</text>
<rect x="760" width="98" /><use href="#s" x="760"/><text x="787">PAD</text>
<rect x="859" width="98" /><use href="#s" x="859"/><text x="886">PAD</text>
<rect x="958" width="98" /><use href="#s" x="958"/><text x="985">PAD</text>
<rect x="1057" width="98" /><use href="#s" x="1057"/><text x="1084">PAD</text>
<rect x="1379" width="98" /><use href="#s" x="1379"/><text x="1406">PAD</text>
<rect x="1478" width="98" /><use href="#s" x="1478"/><text x="1505">PAD</text>
<rect x="1577" width="98" /><use href="#s" x="1577"/><text x="1604">PAD</text>
<rect x="1676" width="98" /><use href="#s" x="1676"/><text x="1703">PAD</text>
<rect x="1775" width="98" /><use href="#s" x="1775"/><text x="1802">PAD</text>
<rect x="1874" width="98" /><use href="#s" x="1874"/><text x="1901">PAD</text>
<rect x="2195.500" width="98" /><use href="#s" x="2195.500"/><text x="2223">PAD</text>
<rect x="2294.500" width="98" /><use href="#s" x="2294.500"/><text x="2322">PAD</text>
<rect x="2393.500" width="98" /><use href="#s" x="2393.500"/><text x="2421">PAD</text>
<rect x="2492.500" width="98" /><use href="#s" x="2492.500"/><text x="2520">PAD</text>
<rect x="2591.500" width="98" /><use href="#s" x="2591.500"/><text x="2619">PAD</text>
</g>
<!-- track 32 -->
<path d="M958 1206h198M1577 1206h396" stroke="#222d35" stroke-width="42"/>
<path d="M958 1224h198M1577 1224h396" stroke="#b5e8e0" stroke-width="2"/>
<g class="c" transform="translate(0,1178)"><rect class="pt" x="958" width="198" style="height:27px" fill="url(#pc)" /><rect class="pt" x="1577" width="396" style="height:27px" fill="url(#pc)" /></g>
<!-- track 33 -->
<g class="c a" transform="translate(0,1250)">
<rect x="1057" width="122" /><use href="#u" x="1057"/><text x="1083">Para..freq</text>
<rect x="1874" width="111" /><use href="#u" x="1874"/><text x="1900">Par..freq</text>
</g>
<g class="c r" transform="translate(0,1282)">
<rect x="959" width="97" /><use href="#u" x="959"/><text x="985">FabF..ix</text>
<rect x="1057" width="122" /><use href="#u" x="1057"/><text x="1083">FabFil..Mix</text>
<rect x="1181" width="98" /><use href="#u" x="1181"/><text x="1207">FabF..ix</text>
<rect x="1280" width="98" /><use href="#u" x="1280"/><text x="1306">FabF..x</text>
<rect x="1379" width="98" /><use href="#u" x="1379"/><text x="1405">FabF..ix</text>
<rect x="1478" width="98" /><use href="#u" x="1478"/><text x="1504">FabF..ix</text>
<rect x="1577" width="98" /><use href="#u" x="1577"/><text x="1603">FabF..ix</text>
<rect x="1676" width="86" /><use href="#u" x="1676"/><text x="1702">Fab..x</text>
<rect x="1769" width="103" /><use href="#u" x="1769"/><text x="1795">FabF..ix</text>
<rect x="1874" width="122" /><use href="#u" x="1874"/><text x="1900">FabFil..Mix</text>
</g>
<g class="c b" transform="translate(0,1314)">
<rect x="959" width="97" /><use href="#u" x="959"/><text x="985">De..wet</text>
<rect x="1057" width="122" /><use href="#u" x="1057"/><text x="1083">Dela..t wet</text>
<rect x="1181" width="98" /><use href="#u" x="1181"/><text x="1207">De..wet</text>
<rect x="1280" width="98" /><use href="#u" x="1280"/><text x="1306">De..wet</text>
<rect x="1379" width="98" /><use href="#u" x="1379"/><text x="1405">De..wet</text>
<rect x="1478" width="98" /><use href="#u" x="1478"/><text x="1504">De..wet</text>
<rect x="1577" width="98" /><use href="#u" x="1577"/><text x="1603">De..wet</text>
<rect x="1676" width="86" /><use href="#u" x="1676"/><text x="1702">De..et</text>
<rect x="1769" width="103" /><use href="#u" x="1769"/><text x="1795">De..wet</text>
<rect x="1874" width="122" /><use href="#u" x="1874"/><text x="1900">Dela..t wet</text>
</g>
<!-- track 37 -->
<path d="M1280 1406h297M1676 1406h297M2096 1406h297" stroke="#222d35" stroke-width="42"/>
<g transform="translate(0,1406)"><use href="#w3" x="1280"/><use href="#w3" x="1379"/><use href="#w3" x="1478"/><use href="#w3" x="1676"/><use href="#w3" x="1775"/><use href="#w3" x="1874"/><use href="#w3" x="2096"/><use href="#w3" x="2195"/><use href="#w3" x="2294"/></g>
<g class="c n h" transform="translate(0,1378)">
<rect x="1281" width="97" /><use href="#s" x="1281"/><text x="1307">AM..AD</text>
<rect x="1379" width="98" /><use href="#s" x="1379"/><text x="1405">AM..AD</text>
<rect x="1478" width="98" /><use href="#s" x="1478"/><text x="1504">AM..AD</text>
<rect x="1676" width="98" /><use href="#s" x="1676"/><text x="1702">AM..AD</text>
<rect x="1775" width="98" /><use href="#s" x="1775"/><text x="1801">AM..AD</text>
<rect x="1874" width="98" /><use href="#s" x="1874"/><text x="1900">AM..AD</text>
<rect x="2096.500" width="98" /><use href="#s" x="2096.500"/><text x="2123">AM..AD</text>
<rect x="2195.500" width="98" /><use href="#s" x="2195.500"/><text x="2222">AM..AD</text>
<rect x="2294.500" width="98" /><use href="#s" x="2294.500"/><text x="2321">AM..AD</text>
</g>
<g class="c p" transform="translate(0,1450)">
<rect x="1281" width="296" /><use href="#u" x="1281"/><text x="1307">Param. EQ 2 (..D - Band 7 freq</text>
<rect x="1676" width="297" /><use href="#u" x="1676"/><text x="1702">Param. EQ 2 (..D - Band 7 freq</text>
<rect x="2096.500" width="297" /><use href="#u" x="2096.500"/><text x="2123">Param. EQ 2 (..D - Band 7 freq</text>
</g>
</svg>
</body></html>
